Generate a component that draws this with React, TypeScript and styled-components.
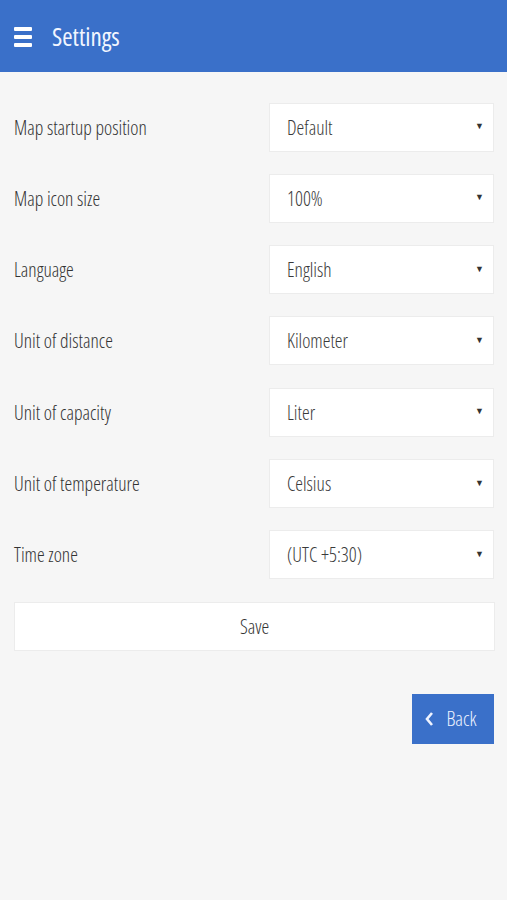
import React from 'react';
import styled, { createGlobalStyle } from 'styled-components';

const GlobalStyle = createGlobalStyle`
  html, body {
    margin: 0;
    padding: 0;
    background: #f6f6f6;
  }
  body {
    font-family: "Open Sans", "Liberation Sans", sans-serif;
    font-stretch: 75%;
    font-weight: 300;
    color: #333;
  }
`;

const Page = styled.div`
  width: 507px;
  min-height: 900px;
  background: #f6f6f6;
`;

const Header = styled.header`
  height: 72px;
  background: #3a70c9;
  display: flex;
  align-items: center;
  padding-left: 14px;
  gap: 20px;
  box-sizing: border-box;
`;

const MenuIcon = styled.div`
  width: 18px;
  display: flex;
  flex-direction: column;
  gap: 4px;
  margin-top: 2px;

  span {
    display: block;
    height: 4px;
    background: #fff;
    border-radius: 1px;
  }
`;

const Title = styled.h1`
  margin: 0;
  font-size: 25px;
  font-weight: 400;
  color: #f2f6ff;
`;

const Content = styled.main`
  padding: 30.6px 13px 0 14px;
  display: flex;
  flex-direction: column;
  gap: 22.3px;
`;

const Row = styled.div`
  display: flex;
  align-items: center;
  justify-content: space-between;
  height: 49px;
`;

const Label = styled.div`
  font-size: 19.5px;
  color: #333;
`;

const Select = styled.div`
  width: 225px;
  height: 49px;
  box-sizing: border-box;
  background: #fff;
  border: 1px solid #ececec;
  display: flex;
  align-items: center;
  justify-content: space-between;
  padding: 0 9px 0 17px;
  font-size: 19.5px;
  color: #3a3a3a;
`;

const Caret = styled.span`
  font-size: 9px;
  color: #333;
  margin-top: -3px;
`;

const SaveButton = styled.button`
  width: 481px;
  height: 49px;
  background: #fff;
  border: 1px solid #ececec;
  font: inherit;
  font-size: 19.5px;
  color: #333;
`;

const Footer = styled.div`
  display: flex;
  justify-content: flex-end;
  margin-top: 21px;
`;

const BackButton = styled.button`
  width: 82px;
  height: 50px;
  background: #3a70c9;
  border: none;
  color: #eef3ff;
  font: inherit;
  font-size: 20px;
  display: flex;
  align-items: center;
  justify-content: center;
  gap: 12px;
  padding: 0 4px 0 0;
`;

const rows: [string, string][] = [
  ['Map startup position', 'Default'],
  ['Map icon size', '100%'],
  ['Language', 'English'],
  ['Unit of distance', 'Kilometer'],
  ['Unit of capacity', 'Liter'],
  ['Unit of temperature', 'Celsius'],
  ['Time zone', '(UTC +5:30)'],
];

export default function App() {
  return (
    <Page>
      <GlobalStyle />
      <Header>
        <MenuIcon>
          <span />
          <span />
          <span />
        </MenuIcon>
        <Title>Settings</Title>
      </Header>
      <Content>
        {rows.map(([label, value]) => (
          <Row key={label}>
            <Label>{label}</Label>
            <Select>
              {value}
              <Caret>▼</Caret>
            </Select>
          </Row>
        ))}
        <SaveButton>Save</SaveButton>
        <Footer>
          <BackButton>
            <svg width="9" height="16" viewBox="0 0 9 16">
              <path d="M7 2 L2 8 L7 14" fill="none" stroke="#eef3ff" strokeWidth="2.6" />
            </svg>
            Back
          </BackButton>
        </Footer>
      </Content>
    </Page>
  );
}
